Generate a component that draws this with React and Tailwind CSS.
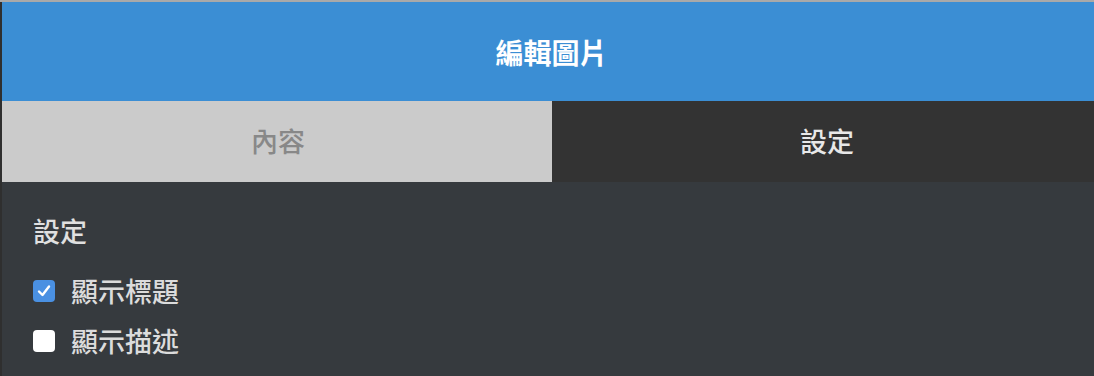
import React, { useState } from "react";

const font = { fontFamily: '"Noto Sans CJK TC", "Noto Sans", sans-serif' };

function Check({ checked, onClick }) {
  return (
    <span
      className={
        "w-[22px] h-[22px] rounded-[4px] flex items-center justify-center shrink-0 " +
        (checked ? "bg-[#4a90e2]" : "bg-white")
      }
      onClick={onClick}
    >
      {checked && (
        <svg width="16" height="16" viewBox="0 0 16 16" fill="none">
          <path d="M3 8.5 L6.5 12 L13 3.5" stroke="white" strokeWidth="2.4" strokeLinecap="round" strokeLinejoin="round" />
        </svg>
      )}
    </span>
  );
}

export default function App() {
  const [showTitle, setShowTitle] = useState(true);
  const [showDesc, setShowDesc] = useState(false);
  return (
    <div className="w-[1094px] h-[376px] bg-[#a9a9a9] pt-[2px] overflow-hidden" style={font}>
      <div className="h-full bg-[#2f2f2f] pl-[2px] flex flex-col">
        <div className="h-[99px] bg-[#3b8ed4] flex items-center justify-center pl-[7px] text-white font-bold text-[28px] shrink-0">
          編輯圖片
        </div>
        <div className="h-[81px] flex shrink-0">
          <div className="w-[550px] bg-[#cbcbcb] flex items-center justify-center pl-[2px] text-[#888888] text-[27px] font-medium">
            內容
          </div>
          <div className="flex-1 bg-[#333333] flex items-center justify-center pl-[8px] text-[#e8e8e8] text-[27px] font-medium">
            設定
          </div>
        </div>
        <div className="flex-1 bg-[#363a3e] px-[31px] pt-[33px]">
          <div className="text-[27px] text-[#e0e0e0] leading-[32px] font-medium">設定</div>
          <div className="mt-[28px] flex flex-col gap-[18px]">
            <label className="flex items-center gap-[16px] text-[27px] text-[#dcdcdc] leading-[32px] font-medium">
              <Check checked={showTitle} onClick={() => setShowTitle(!showTitle)} />
              顯示標題
            </label>
            <label className="flex items-center gap-[16px] text-[27px] text-[#dcdcdc] leading-[32px] font-medium">
              <Check checked={showDesc} onClick={() => setShowDesc(!showDesc)} />
              顯示描述
            </label>
          </div>
        </div>
      </div>
    </div>
  );
}
